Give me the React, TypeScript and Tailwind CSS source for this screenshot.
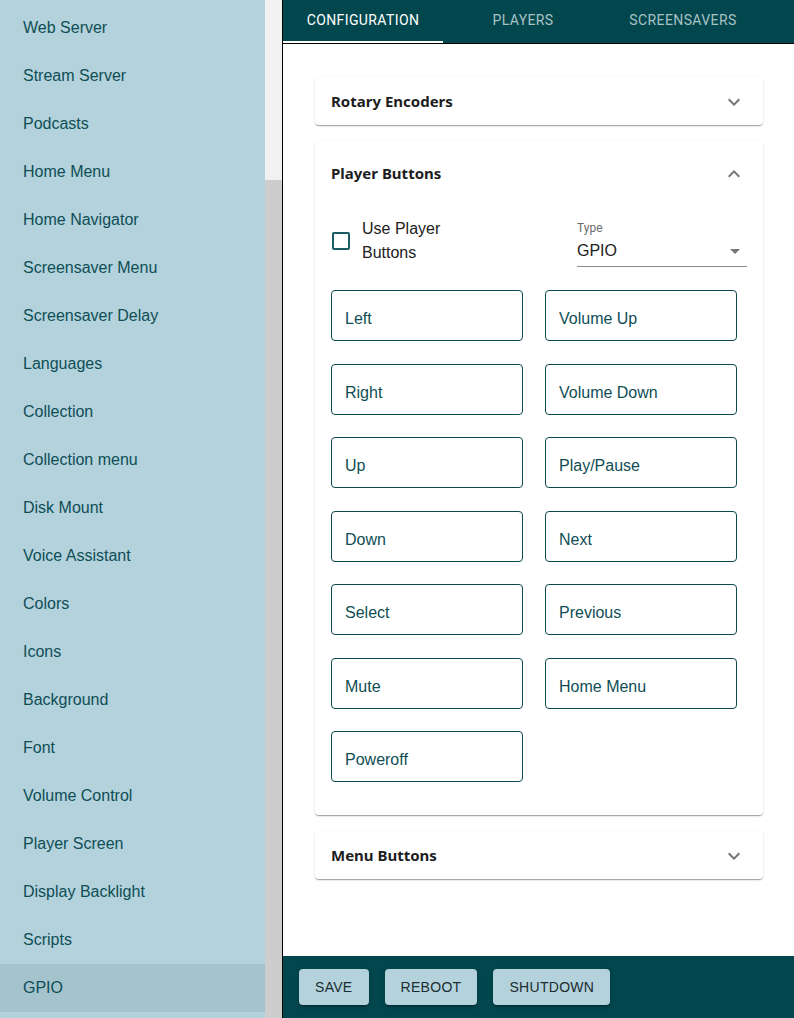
import React from "react"

const NAV = [
  "Web Server",
  "Stream Server",
  "Podcasts",
  "Home Menu",
  "Home Navigator",
  "Screensaver Menu",
  "Screensaver Delay",
  "Languages",
  "Collection",
  "Collection menu",
  "Disk Mount",
  "Voice Assistant",
  "Colors",
  "Icons",
  "Background",
  "Font",
  "Volume Control",
  "Player Screen",
  "Display Backlight",
  "Scripts",
  "GPIO",
]

const FIELDS = [
  ["Left", "Volume Up"],
  ["Right", "Volume Down"],
  ["Up", "Play/Pause"],
  ["Down", "Next"],
  ["Select", "Previous"],
  ["Mute", "Home Menu"],
  ["Poweroff", null],
]

const TABS = ["CONFIGURATION", "PLAYERS", "SCREENSAVERS"]

const cardShadow =
  "shadow-[0_2px_1px_-1px_rgba(0,0,0,0.2),0_1px_1px_0_rgba(0,0,0,0.14),0_1px_3px_0_rgba(0,0,0,0.12)]"

function Chevron({ up }: { up?: boolean }) {
  return (
    <svg width="24" height="24" viewBox="0 0 24 24" className="fill-[#757575]">
      {up ? (
        <path d="M12 8l-6 6 1.41 1.41L12 10.83l4.59 4.58L18 14z" />
      ) : (
        <path d="M16.59 8.59 12 13.17 7.41 8.59 6 10l6 6 6-6z" />
      )}
    </svg>
  )
}

function CardHeader({ title, up }: { title: string; up?: boolean }) {
  return (
    <div className={`flex items-center justify-between pl-4 pr-[17px] pt-px ${up ? "h-16" : "h-12"}`}>
      <span className="font-['Noto_Sans',sans-serif] text-[15px] font-bold text-[#1d1d1d]">{title}</span>
      <Chevron up={up} />
    </div>
  )
}

function Field({ label }: { label: string }) {
  return (
    <div className="h-[51px] rounded-[4px] border border-[#0b4a50] pl-[13px] pt-[19px] text-[16px] leading-[18px] text-[#0f4e55]">
      {label}
    </div>
  )
}

export default function App() {
  return (
    <div className="flex h-[1018px] w-[794px] overflow-hidden bg-white font-['Liberation_Sans',Arial,sans-serif]">
      {/* Sidebar */}
      <div className="h-full w-[265px] shrink-0 overflow-hidden bg-[#b3d2dc] pt-[4px]">
        {NAV.map((item) => (
          <div
            key={item}
            className={`flex h-12 items-center pl-[23px] text-[16px] text-[#0f4e55] ${
              item === "GPIO" ? "bg-[#a5c3cd]" : ""
            }`}
          >
            {item}
          </div>
        ))}
      </div>

      {/* Scrollbar */}
      <div className="flex h-full w-[17px] shrink-0 flex-col bg-[#f1f1f1]">
        <div className="h-[180px]" />
        <div className="flex-1 bg-[#cdcdcd]" />
      </div>

      {/* Main */}
      <div className="flex h-full flex-1 flex-col border-l border-black">
        <div className="flex h-[43px] shrink-0 bg-[#02474d]">
          {TABS.map((tab, i) => (
            <div
              key={tab}
              className={`flex w-[160px] items-center justify-center border-b-2 pb-px font-['Roboto',sans-serif] text-[14px] tracking-[0.4px] ${
                i === 0 ? "border-white text-white" : "border-transparent text-[#a9c2c4]"
              }`}
            >
              {tab}
            </div>
          ))}
        </div>
        <div className="h-px bg-black" />

        <div className="flex flex-1 flex-col gap-4 pl-8 pr-[31px] pt-[33px]">
          <div className={`rounded-[4px] bg-white ${cardShadow}`}>
            <CardHeader title="Rotary Encoders" />
          </div>

          <div className={`rounded-[4px] bg-white pb-[33px] ${cardShadow}`}>
            <CardHeader title="Player Buttons" up />
            <div className="px-4">
              <div className="flex items-start">
                <div className="flex w-[246px] items-center pt-[12px]">
                  <div className="ml-px h-[18px] w-[18px] rounded-[2px] border-2 border-[#1b5b62]" />
                  <div className="ml-3 w-[110px] text-[16px] leading-6 text-[#212121]">Use Player Buttons</div>
                </div>
                <div className="w-[170px]">
                  <div className="pt-[16px] font-['Roboto',sans-serif] text-[12px] leading-[14px] text-[#6b6b6b]">Type</div>
                  <div className="flex items-center justify-between border-b border-[#8a8a8a] pb-[5px] pt-[6px]">
                    <span className="text-[16px] leading-5 text-[#212121]">GPIO</span>
                    <svg width="24" height="24" viewBox="0 0 24 24" className="-my-1 fill-[#757575]">
                      <path d="M7 10l5 5 5-5z" />
                    </svg>
                  </div>
                </div>
              </div>

              <div className="mt-[23px] grid w-[406px] grid-cols-2 gap-x-[22px] gap-y-[22.5px]">
                {FIELDS.map(([a, b]) => (
                  <React.Fragment key={a}>
                    <Field label={a as string} />
                    {b ? <Field label={b} /> : <div />}
                  </React.Fragment>
                ))}
              </div>
            </div>
          </div>

          <div className={`rounded-[4px] bg-white ${cardShadow}`}>
            <CardHeader title="Menu Buttons" />
          </div>
        </div>

        {/* Footer */}
        <div className="flex h-[62px] shrink-0 items-start gap-4 bg-[#02474d] pl-4 pt-[13px]">
          {["SAVE", "REBOOT", "SHUTDOWN"].map((b) => (
            <button
              key={b}
              className="h-9 rounded-[4px] bg-[#b3d2dc] px-4 text-[14px] tracking-[0.3px] text-[#1c2d30] shadow-[0_3px_1px_-2px_rgba(0,0,0,0.2),0_2px_2px_0_rgba(0,0,0,0.14),0_1px_5px_0_rgba(0,0,0,0.12)]"
            >
              {b}
            </button>
          ))}
        </div>
      </div>
    </div>
  )
}
